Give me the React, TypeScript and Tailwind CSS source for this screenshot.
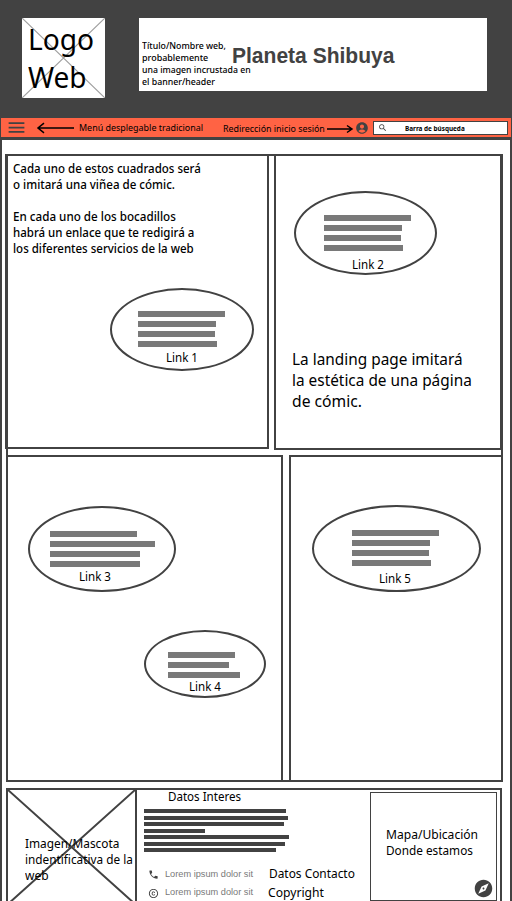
import { useLayoutEffect, useRef, useState, type ReactNode } from "react";
import { MdAccountCircle, MdCopyright, MdExplore, MdMenu, MdPhone, MdSearch } from "react-icons/md";

/** A single line of text, condensed or stretched to a given width. */
function Line({ w, className = "", children }: { w: number; className?: string; children: ReactNode }) {
  const ref = useRef<HTMLSpanElement>(null);
  const [scale, setScale] = useState(1);
  useLayoutEffect(() => {
    if (ref.current) setScale(w / ref.current.offsetWidth);
  }, [w]);
  return (
    <div className={`shrink-0 whitespace-nowrap ${className}`} style={{ width: w }}>
      <span ref={ref} className="inline-block origin-left align-top" style={{ transform: `scaleX(${scale})` }}>
        {children}
      </span>
    </div>
  );
}

function Balloon({ bars, label, className, labelClass }: { bars: number[]; label: string; className: string; labelClass: string }) {
  return (
    <div className={`shrink-0 rounded-[50%] border-2 border-[#424242] ${className}`}>
      <div className="flex flex-col gap-1">
        {bars.map((b, i) => (
          <div key={i} className="h-1.5 bg-[#797979]" style={{ width: b }} />
        ))}
      </div>
      <Line w={32} className={labelClass}>{label}</Line>
    </div>
  );
}

const footerBars = [
  { w: 142, gap: "mt-0" },
  { w: 144, gap: "mt-[3px]" },
  { w: 140, gap: "mt-0.5" },
  { w: 61, gap: "mt-[3px]" },
  { w: 145, gap: "mt-0.5" },
  { w: 141, gap: "mt-[3px]" },
  { w: 132, gap: "mt-0.5" },
];

export default function App() {
  return (
    <div className="flex h-[901px] w-[512px] flex-col overflow-hidden bg-[#424242] font-['Noto_Sans',sans-serif] text-[13px] leading-4 text-black">
      <header className="flex h-[118px] shrink-0 items-start pl-[22px] pt-[18px]">
        <div className="relative h-20 w-[83px] bg-white">
          <svg className="absolute inset-0 h-full w-full" viewBox="0 0 83 80" stroke="#a0a0a0" strokeWidth="1.2">
            <path d="M0 0 83 80M83 0 0 80" />
          </svg>
          <div className="relative pl-1.5 pt-0.5 text-[29px] leading-[38px]">
            <Line w={66}>Logo</Line>
            <Line w={59}>Web</Line>
          </div>
        </div>
        <div className="ml-[34px] flex h-[73px] w-[348px] bg-white pl-[3px]">
          <div className="w-[90px] pt-[21.5px] text-[9.5px] font-medium leading-3">
            <Line w={84}>Título/Nombre web,</Line>
            <Line w={66}>probablemente</Line>
            <Line w={109}>una imagen incrustada en</Line>
            <Line w={73}>el banner/header</Line>
          </div>
          <h1 className="pt-[26px] font-['Liberation_Sans',sans-serif] text-[22px] font-bold leading-6 text-[#424242]">
            <Line w={162.5}>Planeta Shibuya</Line>
          </h1>
        </div>
      </header>

      <nav className="mx-px flex h-[19px] shrink-0 items-center bg-[#ff6344] text-[9.5px] leading-3">
        <MdMenu className="ml-[5px] size-[21px] text-[#424242]" />
        <svg className="ml-[9px] h-3 w-10" viewBox="0 0 40 12" fill="none" stroke="#000" strokeWidth="1.5">
          <path d="M38 6H2M8 1.2 2 6l6 4.8" />
        </svg>
        <Line w={124} className="ml-[3px]">Menú desplegable tradicional</Line>
        <Line w={102} className="ml-[19.5px] mt-0.5">Redirección inicio sesión</Line>
        <svg className="ml-px mt-0.5 h-2.5 w-7" viewBox="0 0 28 10" fill="none" stroke="#000" strokeWidth="1.5">
          <path d="M1 5h25M21 1.5 26 5l-5 3.5" />
        </svg>
        <MdAccountCircle className="ml-px mt-px size-3.5 text-[#424242]" />
        <div className="ml-[4.5px] mt-px flex h-3.5 w-[135px] items-center border border-[#424242] bg-white">
          <MdSearch className="ml-[4px] size-[9.5px] text-[#424242]" />
          <Line w={60} className="ml-[17.5px] mt-0.5 text-[7px] font-bold leading-[10px]">Barra de búsqueda</Line>
        </div>
      </nav>

      <main className="mx-0.5 mt-[3px] flex-1 bg-white pl-1 pt-3.5">
        <div className="h-[628px] w-[497px] border-2 border-[#424242]">
          <div className="-ml-[3px] -mt-0.5 flex items-start gap-[5px]">
            <section className="h-[295px] w-[264px] shrink-0 border-2 border-[#424242] pl-[5.5px] pt-1 font-medium">
              <Line w={187.5}>Cada uno de estos cuadrados será</Line>
              <Line w={162}>o imitará una viñea de cómic.</Line>
              <Line w={163} className="mt-4">En cada uno de los bocadillos</Line>
              <Line w={181}>habrá un enlace que te redigirá a</Line>
              <Line w={180.5}>los diferentes servicios de la web</Line>
              <Balloon
                bars={[87, 78, 77, 79]}
                label="Link 1"
                className="ml-[97.5px] mt-8 h-[83px] w-36 pl-[26px] pt-[21px] font-normal"
                labelClass="ml-7 mt-0.5"
              />
            </section>
            <section className="h-[296px] w-[228px] shrink-0 border-2 border-[#424242] pl-4 pt-[35px]">
              <Balloon
                bars={[87, 78, 77, 79]}
                label="Link 2"
                className="ml-0.5 h-[84px] w-[143px] pl-7 pt-[22px]"
                labelClass="ml-7 mt-[5px]"
              />
              <div className="mt-[73px] text-[17px] leading-[21px]">
                <Line w={171}>La landing page imitará</Line>
                <Line w={180}>la estética de una página</Line>
                <Line w={70}>de cómic.</Line>
              </div>
            </section>
          </div>
          <div className="mt-[5px] flex gap-1.5">
            <section className="h-[325px] w-[275px] shrink-0 border-r-2 border-t-2 border-[#424242] pl-5 pt-[49px]">
              <Balloon
                bars={[87, 105, 90, 90]}
                label="Link 3"
                className="h-[86px] w-[148px] pl-5 pt-[23px]"
                labelClass="ml-[29px] mt-px"
              />
              <Balloon
                bars={[67, 61, 72]}
                label="Link 4"
                className="ml-[116px] mt-[38px] h-[68px] w-[122px] pl-[22px] pt-5"
                labelClass="ml-[21px]"
              />
            </section>
            <section className="h-[325px] w-[212px] shrink-0 border-l-2 border-t-2 border-[#424242] pl-[21px] pt-12">
              <Balloon
                bars={[87, 78, 77, 79]}
                label="Link 5"
                className="h-[87px] w-[169px] pl-[38px] pt-[23px]"
                labelClass="ml-[27px] mt-1"
              />
            </section>
          </div>
        </div>

        <footer className="mt-1.5 flex h-[118px] w-[496px] items-start border-2 border-[#424242]">
          <div className="relative h-[116px] w-[129px] shrink-0 border-r-2 border-[#424242]">
            <svg className="absolute left-0 top-0 h-[114px] w-[127px]" viewBox="0 0 127 114" stroke="#424242" strokeWidth="2">
              <path d="M0 0 127 114M127 0 0 114" />
            </svg>
            <div className="relative pl-[17px] pt-[45px]">
              <Line w={94}>Imagen/Mascota</Line>
              <Line w={108}>indentificativa de la</Line>
              <Line w={24}>web</Line>
            </div>
          </div>
          <div className="w-[233px] shrink-0 pl-[7px]">
            <Line w={73} className="ml-6 -mt-0.5">Datos Interes</Line>
            <div className="pt-[5px]">
              {footerBars.map((b, i) => (
                <div key={i} className={`h-1 bg-[#424242] ${b.gap}`} style={{ width: b.w }} />
              ))}
            </div>
            <div className="mt-[13px] flex h-[18px]">
              <MdPhone className="ml-1 mt-[3.5px] size-[11px] text-[#424242]" />
              <Line w={88} className="ml-[6px] mt-px font-['Liberation_Sans',sans-serif] text-[9px] text-[#797979]">Lorem ipsum dolor sit</Line>
              <Line w={86} className="ml-[15.5px]">Datos Contacto</Line>
            </div>
            <div className="flex h-[18px]">
              <MdCopyright className="ml-1 mt-[4.5px] size-[11px] text-[#424242]" />
              <Line w={88} className="ml-[6px] mt-px font-['Liberation_Sans',sans-serif] text-[9px] text-[#797979]">Lorem ipsum dolor sit</Line>
              <Line w={56} className="ml-[15px] mt-px">Copyright</Line>
            </div>
          </div>
          <div className="mt-0.5 flex h-[109px] w-[127px] shrink-0 flex-col border border-[#424242] pl-[15px] pt-[33px]">
            <Line w={92}>Mapa/Ubicación</Line>
            <Line w={87}>Donde estamos</Line>
            <MdExplore className="ml-[87px] mt-[20px] size-[21px] text-[#424242]" />
          </div>
        </footer>
      </main>
    </div>
  );
}
